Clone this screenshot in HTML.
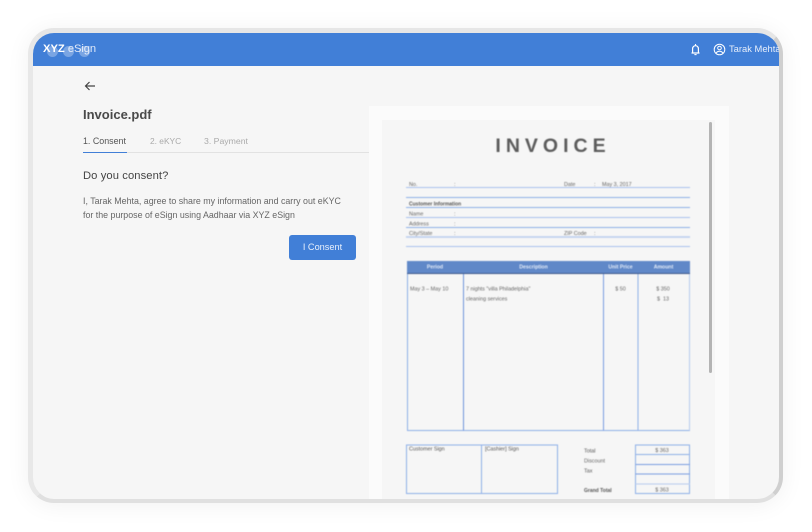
<!DOCTYPE html>
<html lang="en">
<head>
<meta charset="utf-8">
<title>Invoice.pdf</title>
<style>
html,body{margin:0;padding:0;width:812px;height:532px;overflow:hidden;background:#fff;font-family:"Liberation Sans",sans-serif}
.a{position:absolute;white-space:nowrap}
#frame{left:28px;top:28px;width:755px;height:475px;box-sizing:border-box;border-radius:26px;background:#f6f6f6;border-style:solid;border-color:#e6e6e6 #cfcfcf #e0e0e0 #e8e8e8;border-width:5px 4px 4px 5px;box-shadow:0 2px 24px rgba(0,0,0,.06);overflow:hidden}
#bar{left:0;top:0;width:746px;height:33px;background:#417fd7}
.t{filter:blur(.35px)}
.d{filter:blur(.45px)}
</style>
</head>
<body>
<div class="a" id="frame">
  <div class="a" id="bar"></div>
</div>

<div class="a t" style="left:43px;top:42px;font-size:11.2px;line-height:15px;color:#fff;font-weight:bold">XYZ <span style="font-weight:normal;color:#dfe9f9;letter-spacing:-.1px">eSign</span></div>
<div class="a" style="left:47px;top:46px;width:11px;height:11px;border-radius:50%;background:rgba(255,255,255,.3)"></div>
<div class="a" style="left:63px;top:46px;width:11px;height:11px;border-radius:50%;background:rgba(255,255,255,.3)"></div>
<div class="a" style="left:79px;top:46px;width:11px;height:11px;border-radius:50%;background:rgba(255,255,255,.3)"></div>

<svg class="a" style="left:689px;top:43px" width="13" height="13" viewBox="0 0 13 13" fill="none" stroke="#fff" stroke-width="1.2">
  <path d="M2.5 10h8M3.6 10V5.6a2.9 2.9 0 0 1 5.8 0V10"/>
  <path d="M5.4 11.6h2.2" stroke-width="1.1"/>
  <path d="M6.5 1v1.4" stroke-width="1.1"/>
</svg>
<svg class="a" style="left:713px;top:43px" width="13" height="13" viewBox="0 0 13 13" fill="none" stroke="#fff" stroke-width="1">
  <circle cx="6.5" cy="6.5" r="5.3"/>
  <circle cx="6.5" cy="5" r="1.8"/>
  <path d="M2.9 10.2c1-1.5 2.3-2 3.6-2s2.6.5 3.6 2"/>
</svg>
<div class="a t" style="left:729px;top:42px;width:50px;overflow:hidden;font-size:9.4px;line-height:14px;color:#e6eefb">Tarak Mehta</div>

<svg class="a" style="left:84px;top:80px" width="12" height="12" viewBox="0 0 12 12" fill="none" stroke="#444" stroke-width="1.2">
  <path d="M11 6H1.5M5.5 2 1.5 6l4 4"/>
</svg>

<div class="a t" style="left:83px;top:106px;font-size:13px;line-height:17px;font-weight:bold;color:#4a4a4a">Invoice.pdf</div>

<div class="a t" style="left:83px;top:135px;font-size:8.9px;line-height:13px;color:#555">1. Consent</div>
<div class="a t" style="left:150px;top:135px;font-size:8.4px;line-height:13px;color:#aaa">2. eKYC</div>
<div class="a t" style="left:204px;top:135px;font-size:8.7px;line-height:13px;color:#aaa">3. Payment</div>
<div class="a" style="left:83px;top:152px;width:286px;height:1px;background:#e2e2e2"></div>
<div class="a" style="left:83px;top:152px;width:44px;height:1px;background:#417fd7"></div>

<div class="a t" style="left:83px;top:169px;font-size:11.2px;line-height:15px;color:#444;letter-spacing:.1px">Do you consent?</div>
<div class="a t" style="left:83px;top:194px;font-size:8.85px;line-height:14px;color:#666">I, Tarak Mehta, agree to share my information and carry out eKYC<br>for the purpose of eSign using Aadhaar via XYZ eSign</div>

<div class="a" style="left:289px;top:235px;width:67px;height:25px;border-radius:3px;background:#417fd7"></div>
<div class="a t" style="left:289px;top:235px;width:67px;height:25px;line-height:25px;text-align:center;font-size:9.2px;color:#e8f0fc">I Consent</div>

<div class="a" style="left:369px;top:106px;width:360px;height:393px;background:#fbfbfb"></div>
<div class="a" style="left:382px;top:120px;width:333px;height:379px;background:#f6f6f6"></div>
<div class="a" style="left:709px;top:122px;width:3px;height:251px;border-radius:1.5px;background:#b4b4b4"></div>

<svg class="a d" style="left:382px;top:120px" width="333" height="379" viewBox="382 120 333 379" font-family="'Liberation Sans',sans-serif" font-size="5.4" fill="#666">
  <text x="553" y="152" text-anchor="middle" font-size="19.5" font-weight="bold" letter-spacing="5" fill="#5c5c5c">INVOICE</text>

  <g stroke="#a9c2ee" stroke-width="1" fill="none">
    <path d="M406 187.5H690"/><path d="M406 197.5H690" stroke="#8fb0e8"/>
    <path d="M406 207.5H690" stroke="#8fb0e8"/><path d="M406 217.5H690"/>
    <path d="M406 227.5H690" stroke="#8fb0e8"/><path d="M406 237H690" stroke="#b8ccee" stroke-width="1.4"/>
    <path d="M406 246.5H690"/>
  </g>
  <text x="409" y="186">No.</text><text x="454" y="186">:</text>
  <text x="564" y="186">Date</text><text x="594" y="186">:</text><text x="602" y="186">May 3, 2017</text>
  <text x="409" y="205.5" fill="#555" font-weight="bold" font-size="5">Customer Information</text>
  <text x="409" y="215.5">Name</text><text x="454" y="215.5">:</text>
  <text x="409" y="225.5">Address</text><text x="454" y="225.5">:</text>
  <text x="409" y="235">City/State</text><text x="454" y="235">:</text>
  <text x="564" y="235">ZIP Code</text><text x="594" y="235">:</text>

  <rect x="407" y="261" width="283" height="12" fill="#6088c8"/>
  <path d="M407 273.5H690" stroke="#3f5a8c" stroke-width="1"/>
  <g fill="#e4ecf8" text-anchor="middle" font-weight="bold" font-size="5.2">
    <text x="435" y="268.5">Period</text><text x="533.5" y="268.5">Description</text>
    <text x="620.5" y="268.5">Unit Price</text><text x="663.5" y="268.5">Amount</text>
  </g>
  <g stroke="#8fb0e8" fill="none" stroke-width="1">
    <path d="M407.5 274V430.5H690"/><path d="M463.5 274V430.5" stroke="#6f95dc"/>
    <path d="M603.5 274V430.5" stroke="#7a9de0"/><path d="M638 274V430.5"/><path d="M689.5 274V430.5" stroke="#b8ccee"/>
  </g>
  <text x="410" y="290.5">May 3 – May 10</text>
  <text x="466" y="290.5">7 nights "villa Philadelphia"</text>
  <text x="466" y="300.5">cleaning services</text>
  <text x="620.5" y="290.5" text-anchor="middle">$ 50</text>
  <text x="663" y="290.5" text-anchor="middle">$ 350</text>
  <text x="663" y="300.5" text-anchor="middle">$&#160;&#160;13</text>

  <g stroke="#8fb0e8" fill="none" stroke-width="1">
    <rect x="406.5" y="445" width="151" height="48.5"/><path d="M481.5 445V493.5"/>
    <rect x="635.5" y="445" width="54" height="48.5"/>
    <path d="M635.5 454.5H690"/><path d="M635.5 464.5H690" stroke="#7a9de0"/><path d="M635.5 474H690" stroke="#7a9de0"/><path d="M635.5 484H690" stroke="#b8ccee"/>
  </g>
  <text x="409" y="450.5" fill="#555">Customer Sign</text>
  <text x="485" y="450.5" fill="#555">[Cashier] Sign</text>
  <text x="584" y="452.5" fill="#555">Total</text>
  <text x="584" y="462.5">Discount</text>
  <text x="584" y="472.5" fill="#555">Tax</text>
  <text x="584" y="492" fill="#555" font-weight="bold" font-size="5">Grand Total</text>
  <text x="662" y="452" text-anchor="middle">$ 363</text>
  <text x="662" y="491.5" text-anchor="middle">$ 363</text>
</svg>
</body>
</html>
